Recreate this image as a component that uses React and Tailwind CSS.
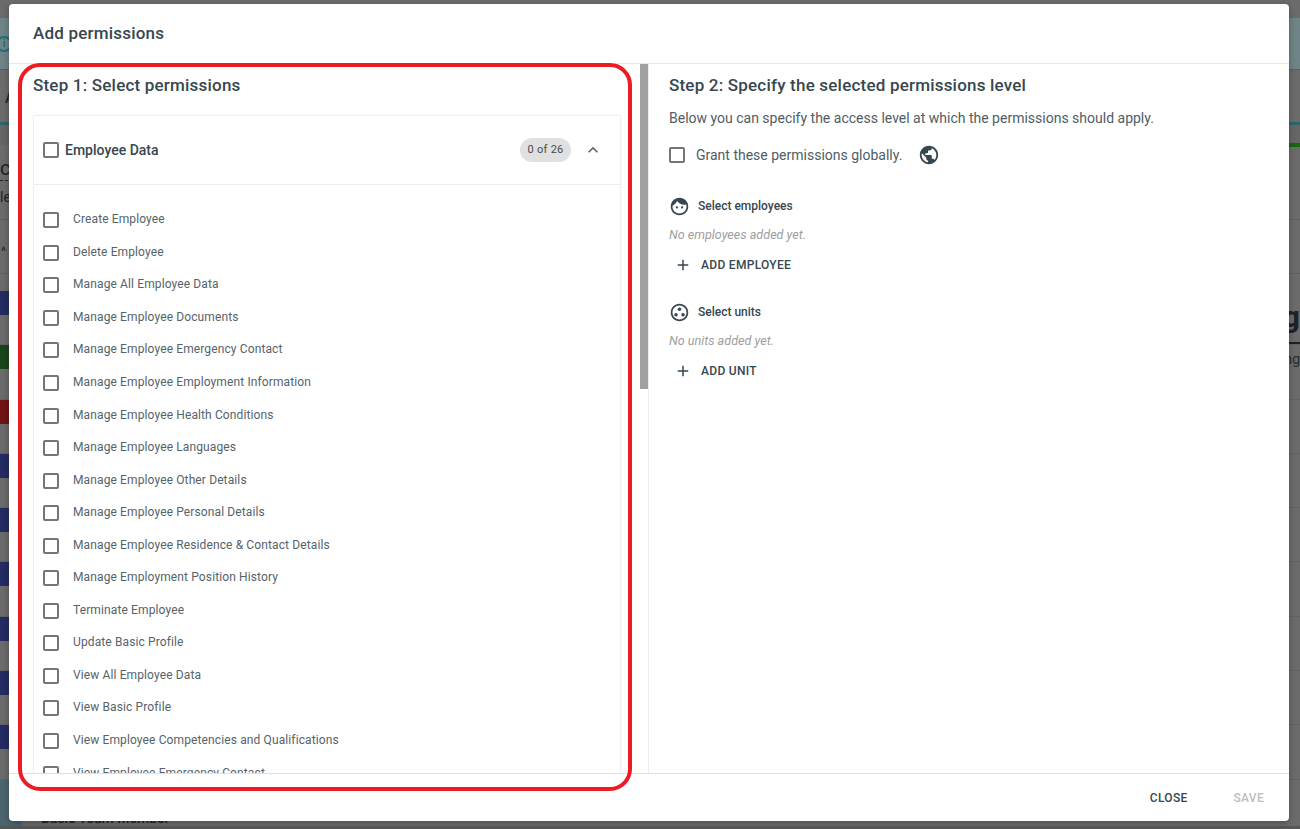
import React from 'react'

const permissions = [
  'Create Employee',
  'Delete Employee',
  'Manage All Employee Data',
  'Manage Employee Documents',
  'Manage Employee Emergency Contact',
  'Manage Employee Employment Information',
  'Manage Employee Health Conditions',
  'Manage Employee Languages',
  'Manage Employee Other Details',
  'Manage Employee Personal Details',
  'Manage Employee Residence & Contact Details',
  'Manage Employment Position History',
  'Terminate Employee',
  'Update Basic Profile',
  'View All Employee Data',
  'View Basic Profile',
  'View Employee Competencies and Qualifications',
  'View Employee Emergency Contact',
]

const bgBars = [
  'bg-[#232c63]',
  'bg-[#1a4419]',
  'bg-[#6f1515]',
  'bg-[#232c63]',
  'bg-[#232c63]',
  'bg-[#232c63]',
  'bg-[#232c63]',
  'bg-[#232c63]',
  'bg-[#232c63]',
]

function Checkbox() {
  return <span className="block h-4 w-4 shrink-0 rounded-[2px] border-2 border-[#757575] bg-white" />
}

function PlusIcon() {
  return (
    <svg viewBox="0 0 24 24" className="h-[18px] w-[18px] fill-[#37474f]">
      <path d="M19 13h-6v6h-2v-6H5v-2h6V5h2v6h6v2z" />
    </svg>
  )
}

function FaceIcon() {
  return (
    <svg viewBox="0 0 24 24" className="h-[21px] w-[21px] fill-[#37474f]">
      <path d="M9 11.75c-.69 0-1.25.56-1.25 1.25s.56 1.25 1.25 1.25 1.25-.56 1.25-1.25-.56-1.25-1.25-1.25zm6 0c-.69 0-1.25.56-1.25 1.25s.56 1.25 1.25 1.25 1.25-.56 1.25-1.25-.56-1.25-1.25-1.25zM12 2C6.48 2 2 6.48 2 12s4.48 10 10 10 10-4.48 10-10S17.52 2 12 2zm0 18c-4.41 0-8-3.59-8-8 0-.29.02-.58.05-.86 2.36-1.05 4.23-2.98 5.21-5.37C11.07 8.33 14.05 10 17.42 10c.78 0 1.53-.09 2.25-.26.21.71.33 1.47.33 2.26 0 4.41-3.59 8-8 8z" />
    </svg>
  )
}

function UnitsIcon() {
  return (
    <svg viewBox="0 0 24 24" className="h-[21px] w-[21px] fill-[#37474f]">
      <path d="M12 2C6.48 2 2 6.48 2 12s4.48 10 10 10 10-4.48 10-10S17.52 2 12 2zm0 18c-4.41 0-8-3.59-8-8s3.59-8 8-8 8 3.59 8 8-3.59 8-8 8z" />
      <circle cx="12" cy="8.2" r="2" />
      <circle cx="8" cy="14.6" r="2" />
      <circle cx="16" cy="14.6" r="2" />
    </svg>
  )
}

function GlobeIcon() {
  return (
    <svg viewBox="0 0 24 24" className="h-[22px] w-[22px] fill-[#37474f]">
      <path d="M12 2C6.48 2 2 6.48 2 12s4.48 10 10 10 10-4.48 10-10S17.52 2 12 2zm-1 17.93c-3.95-.49-7-3.85-7-7.93 0-.62.08-1.21.21-1.79L9 15v1c0 1.1.9 2 2 2v1.93zm6.9-2.54c-.26-.81-1-1.39-1.9-1.39h-1v-3c0-.55-.45-1-1-1H8v-2h2c.55 0 1-.45 1-1V7h2c1.1 0 2-.9 2-2v-.41c2.93 1.19 5 4.06 5 7.41 0 2.08-.8 3.97-2.1 5.39z" />
    </svg>
  )
}

function Background() {
  return (
    <div className="flex h-full flex-col text-[#1c2226]">
      <div className="h-[18px] shrink-0" />
      <div className="flex h-[52px] shrink-0 items-center border-b border-[#5f5f5f] bg-[#6f8487]">
        <span className="ml-[-4px] flex h-4 w-4 items-center justify-center rounded-full border-2 border-[#1f6f78] text-[10px] font-bold text-[#1f6f78]">
          i
        </span>
      </div>
      <div className="flex h-[55px] shrink-0 items-center border-b-[3px] border-[#2f6468] pl-[5px] pt-1 text-[14px] font-medium">
        A
      </div>
      <div className="flex h-[20px] shrink-0 justify-end bg-[#666666]">
        <span className="mt-[18px] h-1 w-[12px] bg-[#17680f]" />
      </div>
      <div className="h-[75px] shrink-0 border-b border-[#5f5f5f]">
        <p className="mt-[11px] w-fit border-b border-dashed border-[#222] text-[20px] leading-6">co</p>
        <p className="mt-[6px] text-[14px] leading-5">le</p>
      </div>
      <div className="flex h-[54px] shrink-0 items-center border-b border-[#5f5f5f] pl-[1px] pt-[10px] text-[12px]">
        ^
      </div>
      <div className="flex shrink-0 flex-col pt-[17px]">
        {bgBars.map((color, index) => (
          <div key={index} className="flex h-[54.3px] shrink-0 justify-between border-b border-[#626262]">
            <span className={`h-[24px] w-[9px] ${color}`} />
            {index === 0 && (
              <span className="mt-[8px] border-b-2 border-[#1c2226] text-[30px] font-bold leading-[36px]">g</span>
            )}
            {index === 1 && <span className="mt-[4px] text-[14px] leading-5 text-[#2b2b2b]">ng</span>}
          </div>
        ))}
      </div>
      <div className="flex flex-1">
        <div className="w-[22px] bg-[#4a6570]" />
        <div className="flex flex-1 items-end pl-[19px]">
          <span className="text-[14px] font-medium leading-4">Basic Team Member</span>
        </div>
      </div>
      <div className="h-[3px] shrink-0 bg-[#575757]" />
    </div>
  )
}

export default function App() {
  return (
    <div
      className="relative h-[829px] w-[1300px] overflow-hidden bg-[#6b6b6b]"
      style={{ fontFamily: 'Roboto, sans-serif' }}
    >
      <Background />

      <div className="absolute left-[9px] top-1 flex h-[817px] w-[1280px] flex-col overflow-hidden rounded-[4px] bg-white text-[#37474f] shadow-[0_2px_6px_rgba(0,0,0,0.3)]">
        <div className="flex h-[60px] shrink-0 items-center border-b border-[#e8e8e8] pl-6 text-[17px] font-medium tracking-[0.2px]">
          Add permissions
        </div>

        <div className="flex min-h-0 flex-1">
          <div className="relative w-[640px] shrink-0 overflow-hidden border-r border-[#ececec]">
            <div className="pl-6 pr-[27px]">
              <h2 className="pb-[20px] pt-[11px] text-[17px] font-medium leading-5 tracking-[0.2px]">
                Step 1: Select permissions
              </h2>
              <div className="rounded-[2px] border-x border-t border-[#f0f0f0] shadow-[0_0_2px_rgba(0,0,0,0.05)]">
                <div className="flex h-[69px] items-center border-b border-[#ececec] pl-[9px] pr-[17px]">
                  <Checkbox />
                  <span className="ml-[6px] text-[14px] font-medium">Employee Data</span>
                  <span className="ml-auto flex h-6 w-[51px] items-center justify-center rounded-full bg-[#e0e0e0] text-[11px] tracking-[0.3px] text-[#4a4a4a]">
                    0 of 26
                  </span>
                  <svg viewBox="0 0 24 24" className="ml-[12px] h-5 w-5 fill-[#616161]">
                    <path d="M12 8l-6 6 1.41 1.41L12 10.83l4.59 4.58L18 14z" />
                  </svg>
                </div>
                <ul className="pt-[19px]">
                  {permissions.map((name) => (
                    <li key={name} className="flex h-[32.55px] items-center pl-[9px]">
                      <Checkbox />
                      <span className="ml-[14px] mt-[-2px] text-[12px] tracking-[0.12px] text-[#55636b]">{name}</span>
                    </li>
                  ))}
                </ul>
              </div>
            </div>
            <span className="absolute right-0 top-0 h-[325px] w-2 bg-[#a0a0a0]" />
          </div>

          <div className="flex-1 pl-5 pt-[11px]">
            <h2 className="text-[17px] font-medium leading-5 tracking-[0.2px]">
              Step 2: Specify the selected permissions level
            </h2>
            <p className="mt-[13px] text-[14px] leading-5 text-[#4f5d65]">
              Below you can specify the access level at which the permissions should apply.
            </p>
            <div className="mt-[17px] flex h-5 items-center">
              <Checkbox />
              <span className="ml-[11px] text-[14px] text-[#4f5d65]">Grant these permissions globally.</span>
              <span className="ml-4">
                <GlobeIcon />
              </span>
            </div>

            <div className="mt-[31px] flex h-5 items-center gap-[8px]">
              <FaceIcon />
              <span className="text-[12px] font-medium">Select employees</span>
            </div>
            <p className="mt-[11px] text-[12.6px] italic leading-4 text-[#9e9e9e]">No employees added yet.</p>
            <button className="mt-[12px] flex h-5 items-center pl-[5px] text-[12px] font-medium tracking-[0.3px]">
              <PlusIcon />
              <span className="ml-[9px]">ADD EMPLOYEE</span>
            </button>

            <div className="mt-[27px] flex h-5 items-center gap-[8px]">
              <UnitsIcon />
              <span className="text-[12px] font-medium">Select units</span>
            </div>
            <p className="mt-[11px] text-[12.6px] italic leading-4 text-[#9e9e9e]">No units added yet.</p>
            <button className="mt-[12px] flex h-5 items-center pl-[5px] text-[12px] font-medium tracking-[0.3px]">
              <PlusIcon />
              <span className="ml-[9px]">ADD UNIT</span>
            </button>
          </div>
        </div>

        <div className="flex h-[48px] shrink-0 items-center justify-end gap-[46px] border-t border-[#e0e0e0] pr-[25px] text-[12px] font-medium tracking-[0.3px]">
          <span>CLOSE</span>
          <span className="text-[#bdbdbd]">SAVE</span>
        </div>
      </div>

      {/* annotation drawn over the screenshot */}
      <div className="pointer-events-none absolute left-[18px] top-[63px] h-[728px] w-[614px] rounded-[22px] border-4 border-[#ed1c24]" />
    </div>
  )
}
